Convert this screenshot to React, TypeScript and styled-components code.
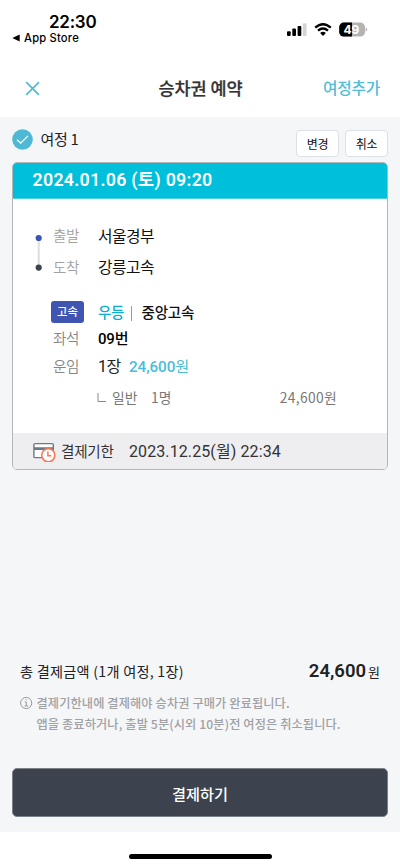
import React from 'react';
import styled, { createGlobalStyle } from 'styled-components';

const GlobalStyle = createGlobalStyle`
  * { box-sizing: border-box; }
  body { margin: 0; background: #fff; }
  button { font: inherit; padding: 0; border: 0; background: none; }
`;

const kr = `'Noto Sans CJK KR', sans-serif`;
const roboto = `Roboto, 'Noto Sans CJK KR', sans-serif`;

const Screen = styled.div`
  width: 400px;
  height: 867px;
  display: flex;
  flex-direction: column;
  overflow: hidden;
  background: #fff;
  color: #222;
  font-family: ${kr};
  white-space: nowrap;
`;

const StatusBar = styled.div`
  height: 59px;
  flex: none;
  display: flex;
  justify-content: space-between;
  padding: 12px 32px 0 12px;
  font-family: Inter, sans-serif;
  color: #000;
`;

const Clock = styled.div`
  padding-left: 37px;
  font-size: 17px;
  line-height: 20px;
  font-weight: 600;
  letter-spacing: -0.25px;
`;

const BackToStore = styled.div`
  display: flex;
  align-items: center;
  gap: 4px;
  height: 12px;
  font-size: 11.2px;
  font-weight: 500;
  letter-spacing: 0.2px;
`;

const StatusIcons = styled.div`
  padding-top: 9px;
`;

const NavBar = styled.header`
  height: 58px;
  flex: none;
  display: grid;
  grid-template-columns: 1fr auto 1fr;
  align-items: center;
  padding: 0 20px 0 25px;
`;

const NavTitle = styled.h1`
  margin: 0 4px 0 0;
  font-size: 17.5px;
  line-height: 24px;
  font-weight: 500;
  letter-spacing: -0.05px;
  -webkit-text-stroke: 0.25px #333;
  color: #333;
`;

const AddTrip = styled.button`
  justify-self: end;
  font-size: 15.8px;
  line-height: 24px;
  font-weight: 500;
  letter-spacing: -0.3px;
  color: #4fbcd8;
`;

const Content = styled.main`
  height: 715px;
  flex: none;
  display: flex;
  flex-direction: column;
  padding: 0 12px 15px;
  background: #f5f6f8;
`;

const TripHeader = styled.div`
  height: 45px;
  display: flex;
  align-items: flex-start;
  padding-top: 12px;
`;

const TripName = styled.span`
  flex: 1;
  margin-left: 7.5px;
  font-size: 15px;
  line-height: 20px;
  letter-spacing: -0.3px;
`;

const SmallButton = styled.button`
  width: 43px;
  height: 27px;
  margin: 1px 0 0 6px;
  border: 1px solid #dce1e5;
  border-radius: 4px;
  background: #fff;
  font-size: 12px;
  line-height: 23px;
  letter-spacing: -0.2px;
  color: #111;
`;

const Card = styled.section`
  height: 308px;
  flex: none;
  display: flex;
  flex-direction: column;
  border: 1px solid #b4b5b7;
  border-radius: 5px;
  overflow: hidden;
  background: #fff;
`;

const CardDate = styled.div`
  height: 36px;
  padding-left: 19.5px;
  background: #00bfdb;
  border-bottom: 1px solid #4dd2e5;
  color: #fff;
  font-family: ${roboto};
  font-size: 17.8px;
  font-weight: 600;
  line-height: 34px;
  letter-spacing: 0.28px;
`;

const Stops = styled.div`
  display: flex;
  height: 102px;
  padding: 21px 0 0 21px;
`;

const StopList = styled.div`
  margin-left: 9px;
`;

const InfoRow = styled.div<{ $h: number }>`
  display: grid;
  grid-template-columns: 45px 1fr;
  align-items: center;
  height: ${(p) => p.$h}px;
`;

const Label = styled.span<{ $dark?: boolean }>`
  margin-top: -1px;
  font-size: 14.6px;
  line-height: 20px;
  font-weight: 350;
  letter-spacing: -0.4px;
  color: ${(p) => (p.$dark ? '#858585' : '#a2a2a2')};
`;

const Place = styled.span`
  font-size: 15.8px;
  line-height: 22px;
  letter-spacing: -0.5px;
  color: #111;
`;

const Details = styled.div`
  flex: 1;
  padding-left: 40px;
`;

const Badge = styled.span`
  width: 33px;
  height: 22px;
  margin-left: -2px;
  border-radius: 3px;
  background: #3f55b1;
  color: #fff;
  font-size: 11.3px;
  font-weight: 500;
  line-height: 21px;
  text-align: center;
`;

const Value = styled.div`
  display: flex;
  align-items: center;
  line-height: 22px;
`;

const Grade = styled.span`
  margin-top: -1px;
  font-size: 14.5px;
  font-weight: 500;
  letter-spacing: -0.3px;
  color: #0fadd0;
`;

const Divider = styled.span`
  width: 1px;
  height: 15px;
  margin: 3px 9.5px 0 7px;
  background: #999;
`;

const Company = styled.span`
  margin-top: -1px;
  font-size: 14.6px;
  font-weight: 500;
  letter-spacing: -0.3px;
  color: #111;
`;

const Seat = styled.span`
  font-family: ${roboto};
  font-size: 15px;
  font-weight: 500;
  letter-spacing: -0.2px;
  color: #000;
`;

const Count = styled.span`
  width: 31px;
  font-family: ${roboto};
  font-size: 16px;
  letter-spacing: -0.6px;
`;

const Fare = styled.span`
  font-family: ${roboto};
  font-size: 15.2px;
  font-weight: 500;
  letter-spacing: -0.05px;
  color: #49bdd9;
`;

const Won = styled.span`
  font-weight: 400;
`;

const FareDetail = styled.div`
  display: flex;
  align-items: center;
  height: 26px;
  margin-top: 5px;
  padding: 0 50px 0 44px;
  font-size: 13.8px;
  line-height: 20px;
  color: #777;
  letter-spacing: 0;
`;

const Passenger = styled.span`
  width: 39px;
  margin-left: 6px;
`;

const PassengerCount = styled.span`
  flex: 1;
`;

const PassengerFare = styled.span`
  letter-spacing: 0.35px;
`;

const Deadline = styled.footer`
  height: 36px;
  display: flex;
  align-items: center;
  padding-left: 20px;
  background: #eeeef0;
  color: #333;
`;

const DeadlineLabel = styled.span`
  width: 68px;
  margin-left: 5px;
  font-size: 14.6px;
  line-height: 20px;
  letter-spacing: -0.25px;
`;

const DeadlineTime = styled.span`
  margin-top: 2px;
  font-family: ${roboto};
  font-size: 16px;
  line-height: 20px;
  letter-spacing: 0.1px;
`;

const Checkout = styled.section`
  margin-top: auto;
`;

const TotalRow = styled.div`
  display: flex;
  justify-content: space-between;
  align-items: center;
  height: 28px;
  padding: 0 8px;
`;

const TotalLabel = styled.span`
  font-size: 14.2px;
  line-height: 22px;
  letter-spacing: 0.24px;
  color: #222;
`;

const TotalPrice = styled.span`
  font-family: ${roboto};
  font-size: 18.5px;
  line-height: 24px;
  font-weight: 600;
  color: #222;
`;

const TotalUnit = styled.small`
  margin-left: 2px;
  font-family: ${kr};
  font-size: 13px;
  font-weight: 400;
`;

const Notice = styled.div`
  display: flex;
  gap: 3.5px;
  padding: 8px 8px 0;
  height: 83px;
  font-size: 12.2px;
  line-height: 20.5px;
  font-weight: 500;
  letter-spacing: 0.12px;
  color: #a0a1a3;
`;

const PayButton = styled.button`
  width: 100%;
  height: 49px;
  border: 1px solid #7b8089;
  border-radius: 5px;
  background: #3d434e;
  color: #fff;
  font-size: 15.2px;
  font-weight: 500;
  line-height: 46px;
`;

const HomeArea = styled.div`
  height: 35px;
  display: flex;
  justify-content: center;
  padding-top: 22px;
`;

const HomeIndicator = styled.div`
  width: 143px;
  height: 5px;
  border-radius: 3px;
  background: #000;
`;

const SignalIcons = () => (
  <svg width="82" height="18" viewBox="0 0 82 18">
    <rect x="1" y="10.2" width="3.7" height="4.8" rx="1" />
    <rect x="6.3" y="7.6" width="3.7" height="7.4" rx="1" />
    <rect x="11.6" y="5" width="3.7" height="10" rx="1" />
    <rect x="16.8" y="2.2" width="3.7" height="12.8" rx="1" fill="#d4d4d4" />
    <g fill="none" stroke="#000" strokeWidth="2.4">
      <path d="M29.2 6.6Q37 -0.3 44.8 6.6" />
      <path d="M32 9.6Q37 5.3 42 9.6" />
    </g>
    <path d="M34.1 11.9Q37 9.6 39.9 11.9L37 14.9Z" />
    <clipPath id="charge"><rect x="53.2" y="1.6" width="25.8" height="14" rx="4.5" /></clipPath>
    <g clipPath="url(#charge)">
      <rect x="53" y="1" width="27" height="15" fill="#b3b3b3" />
      <rect x="53" y="1" width="13" height="15" />
    </g>
    <path d="M79.6 6.4Q83 8.5 79.6 10.8Z" fill="#b3b3b3" />
    <text x="65.4" y="13" textAnchor="middle" fill="#fff" fontFamily="Inter, sans-serif" fontSize="12" fontWeight="700">49</text>
  </svg>
);

const CloseIcon = () => (
  <svg width="16" height="16" viewBox="0 0 16 16" fill="none" stroke="#4fbcd8" strokeWidth="1.7">
    <path d="M1.2 2.1 14 14.9M14 2.1 1.2 14.9" />
  </svg>
);

const CheckIcon = () => (
  <svg width="21" height="21" viewBox="0 0 21 21">
    <circle cx="10.5" cy="10.5" r="10.3" fill="#4fb9d5" />
    <path d="m5 10.7 3.7 3.5 7.3-7.3" fill="none" stroke="#fff" strokeWidth="1.3" />
  </svg>
);

const RouteLine = () => (
  <svg width="10" height="60" viewBox="0 0 10 60">
    <path d="M4.7 18V47" stroke="#ddd" strokeWidth="2" />
    <circle cx="4.7" cy="18" r="3.1" fill="#3d55b2" />
    <circle cx="4.7" cy="47.6" r="3.1" fill="#3d434e" />
  </svg>
);

const CornerIcon = () => (
  <svg width="9" height="9" viewBox="0 0 9 9" fill="none" stroke="#888">
    <path d="M1 0V8.5H9" />
  </svg>
);

const CardClockIcon = () => (
  <svg width="23" height="22" viewBox="0 0 23 22" fill="none">
    <rect x="0.9" y="3.6" width="19.4" height="14" rx="1.2" fill="#fff" stroke="#6c7887" strokeWidth="1.4" />
    <path d="M1 8.6H20" stroke="#6c7887" strokeWidth="2.8" />
    <circle cx="15.3" cy="15.2" r="6.6" fill="#fff" stroke="#ff7657" strokeWidth="1.6" />
    <path d="M14.9 11.6V15.8H18.3" stroke="#ff7657" strokeWidth="1.5" />
  </svg>
);

const InfoIcon = () => (
  <svg width="13" height="20" viewBox="0 0 13 20" fill="none" stroke="#9b9c9e">
    <circle cx="6.2" cy="10" r="5.6" />
    <path d="M4.8 9H6.3V13M4.5 13H8.2M6.2 6.3V7.5" />
  </svg>
);

export default function App() {
  return (
    <Screen>
      <GlobalStyle />
      <StatusBar>
        <div>
          <Clock>22:30</Clock>
          <BackToStore>
            <svg width="8" height="8" viewBox="0 0 8 8"><path d="M.3 4 7.7.5V7.5Z" /></svg>
            App Store
          </BackToStore>
        </div>
        <StatusIcons><SignalIcons /></StatusIcons>
      </StatusBar>
      <NavBar>
        <CloseIcon />
        <NavTitle>승차권 예약</NavTitle>
        <AddTrip>여정추가</AddTrip>
      </NavBar>
      <Content>
        <TripHeader>
          <CheckIcon />
          <TripName>여정 1</TripName>
          <SmallButton>변경</SmallButton>
          <SmallButton>취소</SmallButton>
        </TripHeader>
        <Card>
          <CardDate>2024.01.06 (토) 09:20</CardDate>
          <Stops>
            <RouteLine />
            <StopList>
              <InfoRow $h={31}><Label>출발</Label><Place>서울경부</Place></InfoRow>
              <InfoRow $h={32}><Label>도착</Label><Place>강릉고속</Place></InfoRow>
            </StopList>
          </Stops>
          <Details>
            <InfoRow $h={22}>
              <Badge>고속</Badge>
              <Value><Grade>우등</Grade><Divider /><Company>중앙고속</Company></Value>
            </InfoRow>
            <InfoRow $h={31}><Label $dark>좌석</Label><Value><Seat>09번</Seat></Value></InfoRow>
            <InfoRow $h={25}>
              <Label $dark>운임</Label>
              <Value><Count>1장</Count><Fare>24,600<Won>원</Won></Fare></Value>
            </InfoRow>
            <FareDetail>
              <CornerIcon />
              <Passenger>일반</Passenger>
              <PassengerCount>1명</PassengerCount>
              <PassengerFare>24,600원</PassengerFare>
            </FareDetail>
          </Details>
          <Deadline>
            <CardClockIcon />
            <DeadlineLabel>결제기한</DeadlineLabel>
            <DeadlineTime>2023.12.25(월) 22:34</DeadlineTime>
          </Deadline>
        </Card>
        <Checkout>
          <TotalRow>
            <TotalLabel>총 결제금액 (1개 여정, 1장)</TotalLabel>
            <TotalPrice>24,600<TotalUnit>원</TotalUnit></TotalPrice>
          </TotalRow>
          <Notice>
            <InfoIcon />
            <div>
              결제기한내에 결제해야 승차권 구매가 완료됩니다.<br />
              앱을 종료하거나, 출발 5분(시외 10분)전 여정은 취소됩니다.
            </div>
          </Notice>
          <PayButton>결제하기</PayButton>
        </Checkout>
      </Content>
      <HomeArea><HomeIndicator /></HomeArea>
    </Screen>
  );
}
